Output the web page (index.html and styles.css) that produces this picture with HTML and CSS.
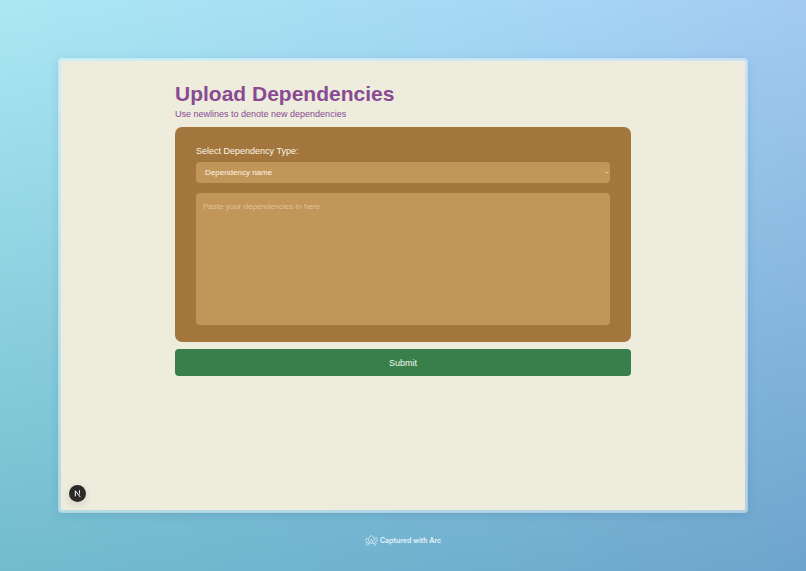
FILE: index.html
```html
<!DOCTYPE html>
<html lang="en">
<head>
<meta charset="UTF-8" />
<meta name="viewport" content="width=device-width, initial-scale=1" />
<title>Upload Dependencies</title>
<link rel="stylesheet" href="styles.css">
</head>
<body>

<div class="window">
  <main class="content">
    <h1>Upload Dependencies</h1>
    <p class="subtitle">Use newlines to denote new dependencies</p>

    <form>
      <div class="panel">
        <label for="dependency-type">Select Dependency Type:</label>
        <div class="select-wrap">
          <select id="dependency-type">
            <option>Dependency name</option>
          </select>
          <svg class="chevron" viewBox="0 0 4 3" aria-hidden="true">
            <path d="M0.5 0.6 L2 2.1 L3.5 0.6" />
          </svg>
        </div>
        <textarea aria-label="Dependencies" placeholder="Paste your dependencies in here"></textarea>
      </div>
      <button class="btn-submit" type="submit">Submit</button>
    </form>
  </main>

  <!-- Dev tools badge -->
  <button class="dev-badge" type="button" aria-label="Open dev tools">
    <svg viewBox="0 0 17 17" aria-hidden="true">
      <defs>
        <linearGradient id="fade" x1="0" y1="0" x2="0" y2="1">
          <stop offset="0.4" stop-color="#fff" />
          <stop offset="1" stop-color="#fff" stop-opacity="0.2" />
        </linearGradient>
      </defs>
      <path d="M6.3 11.3 V5.8 L11.3 12.1" stroke="#fff" />
      <rect x="10" y="5.3" width="1" height="5" fill="url(#fade)" />
    </svg>
  </button>
</div>

<footer>
  <svg class="arc-logo" viewBox="0 0 24 20" aria-hidden="true">
    <path d="M8.5 3.2 C9.5 0.2 14 0.2 15 3.2 L17.6 8.8 C18.3 7.6 18.4 6.8 18.8 5.8 C20 3 23.6 4.5 22.8 7.6 C22.2 10 21 12 19.4 13.6 L20.5 15.5 C21.3 18.5 17.6 20 16 17 L14.8 14.6 C12.8 15.2 10.6 15 8.7 14.2 L7.5 17 C6 20 2 18.5 3 15.5 L4 13.2 C2.8 12 1.8 10.8 1.3 9.2 C0.4 6 4.2 4.5 6 8.5 Z" />
    <path d="M6 8.5 C6.8 11 8 13 8.7 14.2 M17.6 8.8 C16.8 10.4 15.4 11.6 13.9 12.2 L12 8 L9.8 12 M13.9 12.2 L14.8 14.6 M4 13.2 C5.2 14.6 6.4 15.4 7.8 16 M19.4 13.6 C18.2 14.8 17 15.5 15.6 16" />
  </svg>
  <span>Captured with Arc</span>
</footer>

</body>
</html>
```

FILE: styles.css
```css
* {
  box-sizing: border-box;
}
body {
  font-family: "Liberation Sans", Arial, sans-serif;
  margin: 0;
  min-height: 100vh;
  padding: 58px 58px 0;
  display: flex;
  flex-direction: column;
  background:
    linear-gradient(#fff, #abcfd7),
    linear-gradient(92deg, #aae8f3, #a6d7f5 64%, #a3caf2);
  background-blend-mode: multiply;
}
h1, p {
  margin: 0;
}
.window {
  position: relative;
  flex: 1;
  border: 3px solid rgba(255, 255, 255, 0.45);
  border-radius: 4px;
  background: #edecdd;
  background-clip: padding-box;
  box-shadow: 0 2px 8px rgba(40, 90, 130, 0.16);
}
.content {
  width: 66.66%;
  margin: 0 auto;
  padding: 21px 0;
}
h1 {
  color: #8a4a92;
  font-size: 21px;
  line-height: 24px;
}
.subtitle {
  color: #8a4a92;
  font-size: 9px;
  line-height: 14px;
  margin: 1px 0 6px;
}
.panel {
  display: flex;
  flex-direction: column;
  padding: 17px 21px;
  border-radius: 7px;
  background: #a3763d;
}
label {
  color: #fbf5e6;
  font-size: 9px;
  line-height: 14px;
  margin-bottom: 4px;
}
.select-wrap {
  position: relative;
  margin-bottom: 10px;
}
select, textarea {
  display: block;
  width: 100%;
  border: none;
  border-radius: 4px;
  background: #c29559;
  color: #fbf5e6;
  font-family: inherit;
  font-size: 8px;
}
select {
  appearance: none;
  height: 21px;
  padding: 0 9px;
}
.chevron {
  position: absolute;
  right: 1px;
  top: 9px;
  width: 4px;
  height: 3px;
  fill: none;
  stroke: #fbf5e6;
  stroke-width: 0.7;
}
textarea {
  height: 132px;
  padding: 8px 7px;
  line-height: 12px;
  resize: none;
}
textarea::placeholder {
  color: #dfc49c;
}
.btn-submit {
  display: block;
  width: 100%;
  margin-top: 7px;
  padding: 7px 6px 6px;
  border: none;
  border-radius: 4px;
  background: #387f4b;
  color: #f5f8ee;
  font-family: inherit;
  font-size: 9px;
  line-height: 14px;
  cursor: pointer;
}
.btn-submit:hover {
  background: #2f6f40;
}

/* Dev tools badge */
.dev-badge {
  position: absolute;
  left: 8px;
  bottom: 8px;
  width: 17px;
  height: 17px;
  padding: 0;
  border: none;
  border-radius: 50%;
  background: #2b2b29;
  box-shadow: 0 3px 8px rgba(0, 0, 0, 0.12);
  cursor: pointer;
}
.dev-badge svg {
  display: block;
  fill: none;
}

footer {
  display: flex;
  align-items: center;
  justify-content: center;
  gap: 2px;
  height: 58px;
  padding-bottom: 3px;
  color: #e4f4fa;
  font-family: Inter, sans-serif;
  font-size: 7px;
  font-weight: 600;
}
.arc-logo {
  width: 13px;
  height: 11px;
  fill: none;
  stroke: #e4f4fa;
  stroke-width: 1.3;
}
```
